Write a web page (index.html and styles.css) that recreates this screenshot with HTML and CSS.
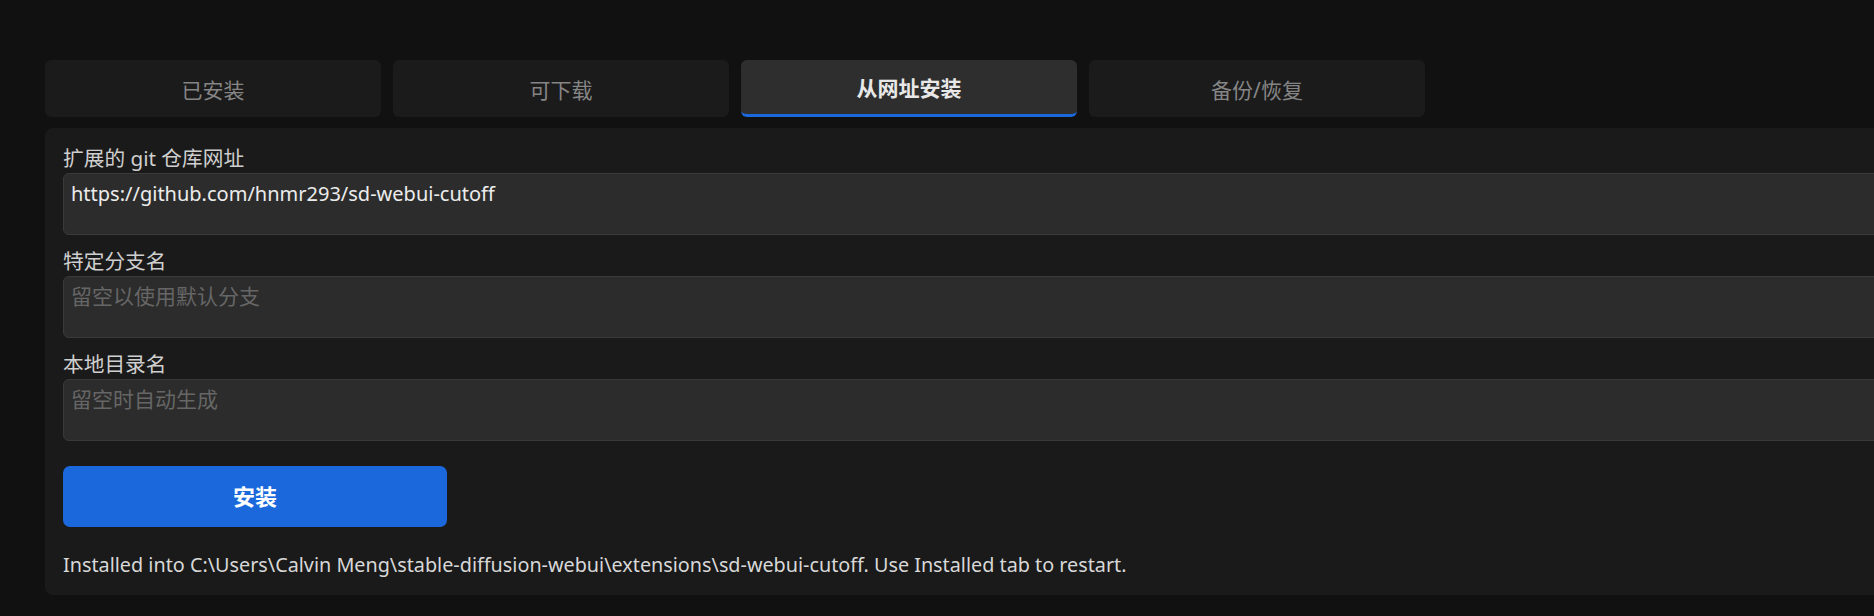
FILE: index.html
```html
<!DOCTYPE html>
<html lang="zh-CN">
<head>
    <meta charset="UTF-8">
    <meta name="viewport" content="width=device-width, initial-scale=1.0">
    <title>扩展 - 从网址安装</title>
    <link rel="stylesheet" href="styles.css">
</head>
<body>
    <div class="tabs">
        <button class="tab">已安装</button>
        <button class="tab">可下载</button>
        <button class="tab active">从网址安装</button>
        <button class="tab">备份/恢复</button>
    </div>
    <div class="panel">
        <label class="field">
            <span class="label">扩展的 git 仓库网址</span>
            <input class="box" type="text" value="https://github.com/hnmr293/sd-webui-cutoff">
        </label>
        <label class="field">
            <span class="label">特定分支名</span>
            <input class="box" type="text" placeholder="留空以使用默认分支">
        </label>
        <label class="field">
            <span class="label">本地目录名</span>
            <input class="box" type="text" placeholder="留空时自动生成">
        </label>
        <button class="install-btn">安装</button>
        <p class="result">Installed into C:\Users\Calvin Meng\stable-diffusion-webui\extensions\sd-webui-cutoff. Use Installed tab to restart.</p>
    </div>
</body>
</html>
```

FILE: styles.css
```css
body {
    margin: 0;
    padding: 60px 0 0 45px;
    background-color: #111111;
    color: #d0d0d0;
    font-family: "Noto Sans", "Noto Sans CJK SC", sans-serif;
    overflow: hidden;
}
.tabs {
    display: flex;
    gap: 12px;
}
.tab {
    width: 336px;
    height: 57px;
    background: #1b1b1b;
    color: #858585;
    border: none;
    border-radius: 6px;
    font-family: inherit;
    font-size: 21px;
    padding: 0;
}
.tab.active {
    background: #2e2e2e;
    color: #e8e8e8;
    font-weight: bold;
    border-bottom: 3px solid #1a68dc;
}
.panel {
    margin-top: 11px;
    width: 1900px;
    background: #1a1a1a;
    border-radius: 8px;
    padding: 17px 18px 16px;
}
.field {
    display: block;
    margin-bottom: 13px;
}
.label {
    display: block;
    font-size: 20.7px;
    line-height: 26px;
    margin-bottom: 2px;
    color: #cfcfcf;
}
.box {
    display: block;
    box-sizing: border-box;
    width: 100%;
    height: 62px;
    background: #2c2c2c;
    border: 1px solid #3a3a3a;
    border-radius: 6px;
    color: #ececec;
    font-family: inherit;
    font-size: 20px;
    padding: 0 7px 22px;
    outline: none;
}
.box::placeholder {
    color: #666666;
    font-size: 21px;
}
.install-btn {
    margin-top: 12px;
    width: 384px;
    height: 61px;
    background: #1a68dc;
    color: #ffffff;
    border: none;
    border-radius: 7px;
    font-family: inherit;
    font-size: 22px;
    font-weight: bold;
    padding: 0 0 4px;
}
.result {
    margin: 24px 0 0;
    font-size: 19.8px;
    line-height: 28px;
    color: #d8d8d8;
}
```
